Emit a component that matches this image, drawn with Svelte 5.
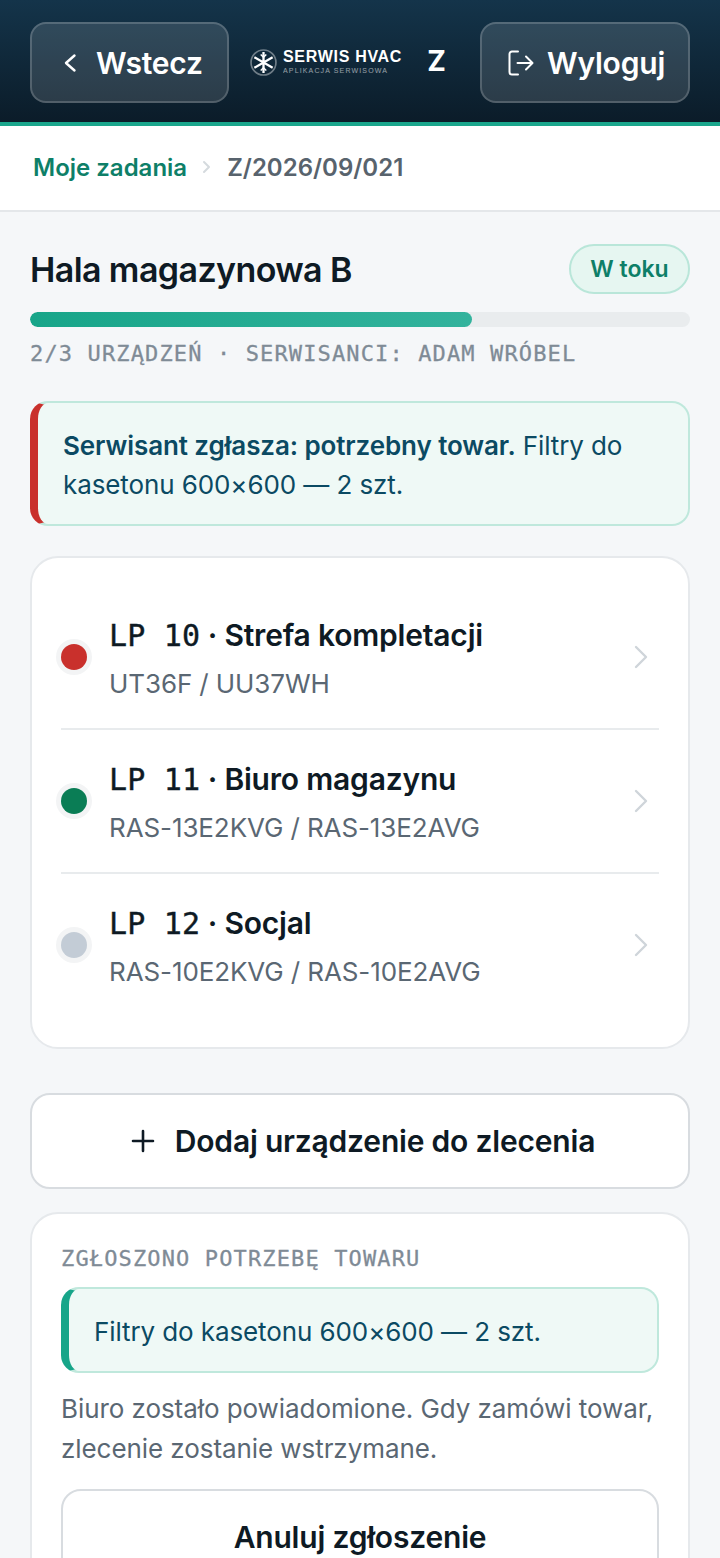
<script>
  const devices = [
    { lp: '10', name: 'Strefa kompletacji', model: 'UT36F / UU37WH', status: 'red' },
    { lp: '11', name: 'Biuro magazynu', model: 'RAS-13E2KVG / RAS-13E2AVG', status: 'green' },
    { lp: '12', name: 'Socjal', model: 'RAS-10E2KVG / RAS-10E2AVG', status: 'grey' }
  ];
</script>

<div class="page">
  <header class="top">
    <button class="hbtn back">
      <svg width="28" height="28" viewBox="0 0 28 28" fill="none" stroke="#fff" stroke-width="2.4" stroke-linecap="round" stroke-linejoin="round"><path d="M17.500 6.500L9 14l8.500 7.500"/></svg>
      <span>Wstecz</span>
    </button>
    <div class="brand">
      <div class="logo">
        <svg width="27" height="27" viewBox="0 0 26 26" fill="none" stroke="#fff">
          <circle cx="13" cy="13" r="12" stroke="#fff" stroke-opacity=".4" stroke-width="1.6"/>
          <path d="M13 2.800v20.400M4.200 7.900l17.600 10.200M21.800 7.900L4.200 18.100" stroke-width="2.200"/>
          <path d="M10.300 5.200L13 8l2.700-2.800M10.300 20.800L13 18l2.700 2.800" stroke-width="1.400"/>
        </svg>
        <div class="logotext">
          <div class="l1">SERWIS HVAC</div>
          <div class="l2">APLIKACJA SERWISOWA</div>
        </div>
      </div>
      <div class="z">Z</div>
    </div>
    <button class="hbtn out">
      <svg width="28" height="28" viewBox="0 0 28 28" fill="none" stroke="#fff" stroke-width="2" stroke-linecap="round" stroke-linejoin="round"><path d="M12 2.500H6A2.500 2.500 0 0 0 3.500 5v18A2.500 2.500 0 0 0 6 25.500h6"/><path d="M11.500 14H26M20 7.500L26.500 14 20 20.500"/></svg>
      <span>Wyloguj</span>
    </button>
  </header>

  <nav class="crumbs">
    <span class="c-link">Moje zadania</span>
    <svg width="14" height="14" viewBox="0 0 14 14" fill="none" stroke="#d5dade" stroke-width="2" stroke-linecap="round" stroke-linejoin="round"><path d="M5 2l5 5-5 5"/></svg>
    <span class="c-cur">Z/2026/09/021</span>
  </nav>

  <main class="content">
    <div class="title-row">
      <h1>Hala magazynowa B</h1>
      <span class="pill">W toku</span>
    </div>
    <div class="track"><div class="fill"></div></div>
    <div class="meta">2/3 URZĄDZEŃ · SERWISANCI: ADAM WRÓBEL</div>

    <div class="note note-red">
      <strong>Serwisant zgłasza: potrzebny towar.</strong> Filtry do kasetonu 600×600 — 2 szt.
    </div>

    <section class="card list">
      {#each devices as d, i}
        <div class="row" class:sep={i > 0}>
          <span class="dot {d.status}"></span>
          <div class="info">
            <div class="name"><span class="lp">LP {d.lp}</span> · {d.name}</div>
            <div class="model">{d.model}</div>
          </div>
          <svg class="chev" width="20" height="28" viewBox="0 0 20 28" fill="none" stroke="#cfd5da" stroke-width="2.400" stroke-linecap="round" stroke-linejoin="round"><path d="M5 4l10 10-10 10"/></svg>
        </div>
      {/each}
    </section>

    <button class="btn add">
      <svg width="24" height="24" viewBox="0 0 24 24" fill="none" stroke="#0e1a24" stroke-width="2.600" stroke-linecap="round"><path d="M12 2v20M2 12h20"/></svg>
      <span>Dodaj urządzenie do zlecenia</span>
    </button>

    <section class="card req">
      <div class="label">ZGŁOSZONO POTRZEBĘ TOWARU</div>
      <div class="note note-teal">Filtry do kasetonu 600×600 — 2 szt.</div>
      <p class="desc">Biuro zostało powiadomione. Gdy zamówi towar, zlecenie zostanie wstrzymane.</p>
      <button class="btn cancel">Anuluj zgłoszenie</button>
    </section>
  </main>
</div>

<style>
  :global(body) { margin: 0; background: #f5f7f9; }
  .page { width: 720px; height: 1558px; overflow: hidden; font-family: Inter, "Noto Sans", sans-serif; color: #0e1a24; background: #f5f7f9; }
  button { font-family: inherit; cursor: pointer; }

  .top { box-sizing: border-box; height: 126px; padding: 22px 30px 0; display: flex; align-items: flex-start; background: linear-gradient(180deg, #14344a 0%, #0b1c29 100%); border-bottom: 4px solid #1aa68c; }
  .hbtn { box-sizing: border-box; height: 81px; display: flex; align-items: center; border: 2px solid rgba(255,255,255,.18); border-radius: 16px; background: rgba(255,255,255,.13); color: #fff; font-size: 30px; font-weight: 600; letter-spacing: -.2px; padding: 0; }
  .back { width: 199px; padding-left: 25px; gap: 11px; }
  .out { width: 210px; padding-left: 24px; gap: 13px; }
  .brand { display: flex; flex: 1; align-items: center; height: 81px; padding-left: 21px; gap: 25px; }
  .logo { display: flex; align-items: center; gap: 6px; }
  .logotext { font-family: "Liberation Sans", Arial, sans-serif; color: #fff; }
  .l1 { font-size: 16px; font-weight: 700; letter-spacing: .7px; line-height: 14px; white-space: nowrap; }
  .l2 { font-size: 7px; letter-spacing: 1.150px; line-height: 9px; margin-top: 2px; opacity: .55; white-space: nowrap; }
  .z { font-size: 28px; font-weight: 700; color: #fff; margin-top: -3px; }

  .crumbs { box-sizing: border-box; height: 86px; display: flex; align-items: center; gap: 12px; padding: 0 33px 2px; background: #fff; border-bottom: 2px solid #e4e7ea; font-size: 24px; font-weight: 600; }
  .c-link { color: #0e7f68; }
  .c-cur { color: #58636d; margin-left: 2px; }

  .content { padding: 32px 30px 0; }
  .title-row { display: flex; justify-content: space-between; align-items: center; height: 50px; }
  h1 { margin: 0; font-size: 34px; font-weight: 600; color: #0e1a24; letter-spacing: -.6px; }
  .pill { box-sizing: border-box; height: 50px; width: 121px; display: flex; align-items: center; justify-content: center; background: #e6f6f1; border: 2px solid #b9e6d9; border-radius: 25px; color: #0e7f68; font-size: 23px; font-weight: 600; }
  .track { height: 15px; margin-top: 18px; border-radius: 8px; background: #e9ecee; overflow: hidden; }
  .fill { height: 100%; width: 67%; border-radius: 8px; background: linear-gradient(90deg, #17a589, #33b39d); }
  .meta { margin-top: 12px; height: 30px; line-height: 30px; font-family: "DejaVu Sans Mono", "Liberation Mono", monospace; font-size: 22px; letter-spacing: 1.130px; -webkit-text-stroke: .3px #7f8b96; color: #7f8b96; white-space: nowrap; }

  .note { box-sizing: border-box; border: 2px solid #bfe8dc; border-radius: 18px; background: #eff9f6; color: #0b4a63; letter-spacing: -.1px; }
  .note-red { margin-top: 32px; height: 125px; padding: 23px 30px 0 25px; border-left: 8px solid #c9302c; font-size: 26px; line-height: 39px; }
  .note-red strong { font-weight: 600; }

  .card { box-sizing: border-box; background: #fff; border: 2px solid #e6e9ec; border-radius: 28px; }
  .list { margin-top: 30px; height: 493px; padding: 26px 29px 0; }
  .row { box-sizing: border-box; height: 144px; display: flex; align-items: center; gap: 22px; padding-top: 2px; }
  .sep { padding-top: 0; border-top: 2px solid #e8ebed; }
  .dot { flex: none; width: 26px; height: 26px; border-radius: 50%; box-shadow: 0 0 0 5px #f3f4f5; }
  .dot.red { background: #c9302c; }
  .dot.green { background: #0a7d55; }
  .dot.grey { background: #c3ccd6; }
  .info { flex: 1; min-width: 0; }
  .name { font-size: 30px; font-weight: 600; letter-spacing: -.2px; line-height: 40px; color: #0e1a24; white-space: nowrap; }
  .lp { font-family: "DejaVu Sans Mono", monospace; font-weight: 400; letter-spacing: .2px; -webkit-text-stroke: .4px #0e1a24; }
  .model { margin-top: 12px; font-size: 26px; letter-spacing: -.1px; line-height: 32px; color: #5a6773; white-space: nowrap; }
  .chev { flex: none; margin-right: 8px; }

  .btn { box-sizing: border-box; display: flex; align-items: center; justify-content: center; width: 100%; background: #fff; border: 2px solid #d8dce0; border-radius: 20px; color: #0e1a24; font-weight: 600; font-size: 30px; letter-spacing: -.2px; padding: 0; }
  .add { margin-top: 44px; height: 96px; gap: 20px; padding-left: 6px; }

  .req { margin-top: 23px; height: 400px; padding: 30px 29px 0; }
  .label { font-family: "DejaVu Sans Mono", monospace; font-size: 22px; letter-spacing: 1.130px; -webkit-text-stroke: .3px #7f8b96; color: #7f8b96; line-height: 30px; }
  .note-teal { margin-top: 13px; height: 86px; padding: 3px 25px 0; border-left: 8px solid #17a589; display: flex; align-items: center; font-size: 26px; }
  .desc { margin: 16px 0 0; font-size: 26px; letter-spacing: -.07px; line-height: 40px; color: #5a6773; }
  .cancel { margin-top: 20px; height: 96px; }
</style>
